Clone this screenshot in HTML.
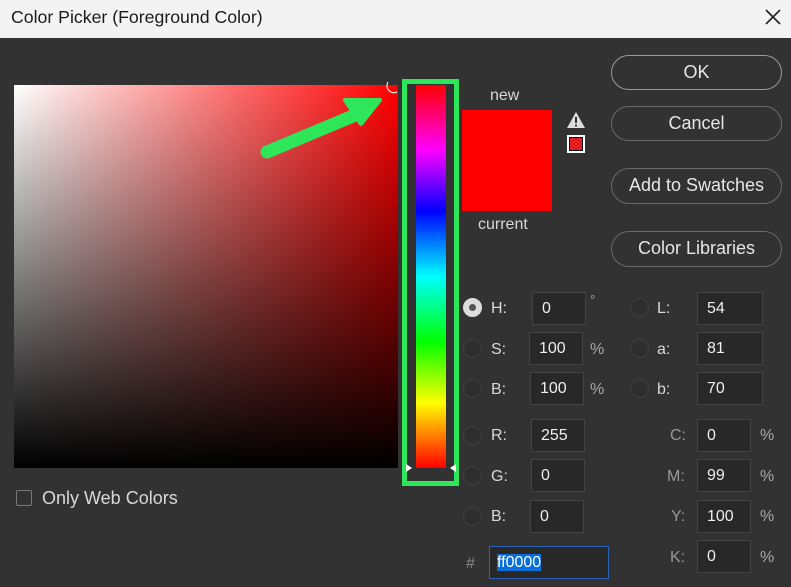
<!DOCTYPE html>
<html><head><meta charset="utf-8"><style>
*{margin:0;padding:0;box-sizing:border-box}
body{width:791px;height:587px;overflow:hidden;background:#323232;font-family:"Liberation Sans",sans-serif;position:relative;color:#d6d6d6}
.a{position:absolute}
.title{left:0;top:0;width:791px;height:38px;background:#f3f3f3;color:#1a1a1a;font-size:17.7px;line-height:34px;padding-left:11px}
.btn{position:absolute;left:611px;width:171px;border:1.5px solid #9a9a9a;border-radius:18px;color:#e6e6e6;font-size:18px;text-align:center}
.inp{position:absolute;background:#282828;border:1px solid #444;color:#eee;font-size:16px;line-height:32px;padding-left:9px;height:33px}
.lb{position:absolute;font-size:16px;color:#d8d8d8}
.rd{position:absolute;width:19px;height:19px;border-radius:50%;border:1.5px solid #404040;background:#2e2e2e}
</style></head><body>
<div class="a title">Color Picker (Foreground Color)</div>
<svg class="a" style="left:764px;top:8px" width="18" height="18"><path d="M2 2L16 16M16 2L2 16" stroke="#222" stroke-width="1.6"/></svg>

<div class="a" style="left:14px;top:85px;width:384px;height:383px;background:linear-gradient(to bottom,rgba(0,0,0,0),#000),linear-gradient(to right,#fff,#f00)"></div>
<svg class="a" style="left:385px;top:80px" width="16" height="16"><path d="M3 2A7 7 0 0 0 12 12" stroke="#fff" fill="none" stroke-width="1"/></svg>
<svg class="a" style="left:255px;top:90px" width="140" height="75"><path d="M12 62L98 26" stroke="#2ee65a" stroke-width="13" stroke-linecap="round"/><path d="M90 10L125 10L106 34Z" fill="#2ee65a" stroke="#2ee65a" stroke-width="4" stroke-linejoin="round"/></svg>

<div class="a" style="left:402px;top:79px;width:57px;height:407px;border:5px solid #2ee65a"></div>
<div class="a" style="left:416px;top:85px;width:30px;height:383px;background:linear-gradient(to bottom,#f00 0%,#f0f 17%,#00f 33%,#0ff 50%,#0f0 67%,#ff0 83%,#f00 100%)"></div>
<svg class="a" style="left:406px;top:462px" width="50" height="12"><path d="M0 2L6 6L0 10Z M50 2L44 6L50 10Z" fill="#fff"/></svg>

<div class="lb" style="left:490px;top:87px">new</div>
<div class="a" style="left:462px;top:110px;width:90px;height:101px;background:#f00"></div>
<div class="lb" style="left:478px;top:216px">current</div>
<svg class="a" style="left:566px;top:111px" width="20" height="18"><path d="M10 1L19 17H1Z" fill="#ddd"/><rect x="9" y="6" width="2" height="6" fill="#333"/><rect x="9" y="13.5" width="2" height="2" fill="#333"/></svg>
<div class="a" style="left:567px;top:135px;width:18px;height:18px;background:#fff;padding:2px"><div style="width:14px;height:14px;background:#000;padding:1px"><div style="width:12px;height:12px;background:#e02020"></div></div></div>

<div class="btn" style="top:55px;height:35px;line-height:32px">OK</div>
<div class="btn" style="top:106px;height:35px;line-height:32px;border-color:#6a6a6a">Cancel</div>
<div class="btn" style="top:168px;height:36px;line-height:33px;border-color:#6a6a6a">Add to Swatches</div>
<div class="btn" style="top:231px;height:36px;line-height:33px;border-color:#6a6a6a">Color Libraries</div>

<div class="rd" style="left:463px;top:298px;background:#ddd;border-color:#ddd"><div style="width:7px;height:7px;border-radius:50%;background:#555;margin:4.5px"></div></div>
<div class="rd" style="left:463px;top:339px"></div>
<div class="rd" style="left:463px;top:379px"></div>
<div class="rd" style="left:463px;top:426px"></div>
<div class="rd" style="left:463px;top:466px"></div>
<div class="rd" style="left:463px;top:507px"></div>
<div class="rd" style="left:630px;top:298px"></div>
<div class="rd" style="left:630px;top:339px"></div>
<div class="rd" style="left:630px;top:379px"></div>

<div class="lb" style="left:491px;top:300px">H:</div>
<div class="lb" style="left:491px;top:341px">S:</div>
<div class="lb" style="left:491px;top:381px">B:</div>
<div class="lb" style="left:491px;top:427px">R:</div>
<div class="lb" style="left:491px;top:468px">G:</div>
<div class="lb" style="left:491px;top:508px">B:</div>
<div class="lb" style="left:466px;top:555px;color:#888">#</div>
<div class="lb" style="left:657px;top:300px">L:</div>
<div class="lb" style="left:657px;top:341px">a:</div>
<div class="lb" style="left:657px;top:381px">b:</div>
<div class="lb" style="left:670px;top:427px;color:#999">C:</div>
<div class="lb" style="left:667px;top:468px;color:#999">M:</div>
<div class="lb" style="left:671px;top:508px;color:#999">Y:</div>
<div class="lb" style="left:670px;top:549px;color:#999">K:</div>

<div class="inp" style="left:532px;top:292px;width:54px">0</div>
<div class="inp" style="left:529px;top:332px;width:54px">100</div>
<div class="inp" style="left:530px;top:372px;width:54px">100</div>
<div class="inp" style="left:531px;top:419px;width:54px">255</div>
<div class="inp" style="left:531px;top:459px;width:54px">0</div>
<div class="inp" style="left:530px;top:500px;width:54px">0</div>
<div class="inp" style="left:697px;top:292px;width:66px">54</div>
<div class="inp" style="left:697px;top:332px;width:66px">81</div>
<div class="inp" style="left:697px;top:372px;width:66px">70</div>
<div class="inp" style="left:697px;top:419px;width:54px">0</div>
<div class="inp" style="left:697px;top:459px;width:54px">99</div>
<div class="inp" style="left:697px;top:500px;width:54px">100</div>
<div class="inp" style="left:697px;top:540px;width:54px">0</div>
<div class="inp" style="left:489px;top:546px;width:120px;border-color:#2a64b8;padding-left:7px"><span style="background:#0a6ed8;color:#fff">ff0000</span></div>

<div class="lb" style="left:590px;top:292px;font-size:13px;color:#aaa">°</div>
<div class="lb" style="left:590px;top:341px;color:#aaa">%</div>
<div class="lb" style="left:590px;top:381px;color:#aaa">%</div>
<div class="lb" style="left:760px;top:427px;color:#aaa">%</div>
<div class="lb" style="left:760px;top:468px;color:#aaa">%</div>
<div class="lb" style="left:760px;top:508px;color:#aaa">%</div>
<div class="lb" style="left:760px;top:549px;color:#aaa">%</div>

<div class="a" style="left:16px;top:490px;width:16px;height:16px;border:1.5px solid #777;border-radius:2px"></div>
<div class="lb" style="left:42px;top:488px;font-size:18px">Only Web Colors</div>
</body></html>
